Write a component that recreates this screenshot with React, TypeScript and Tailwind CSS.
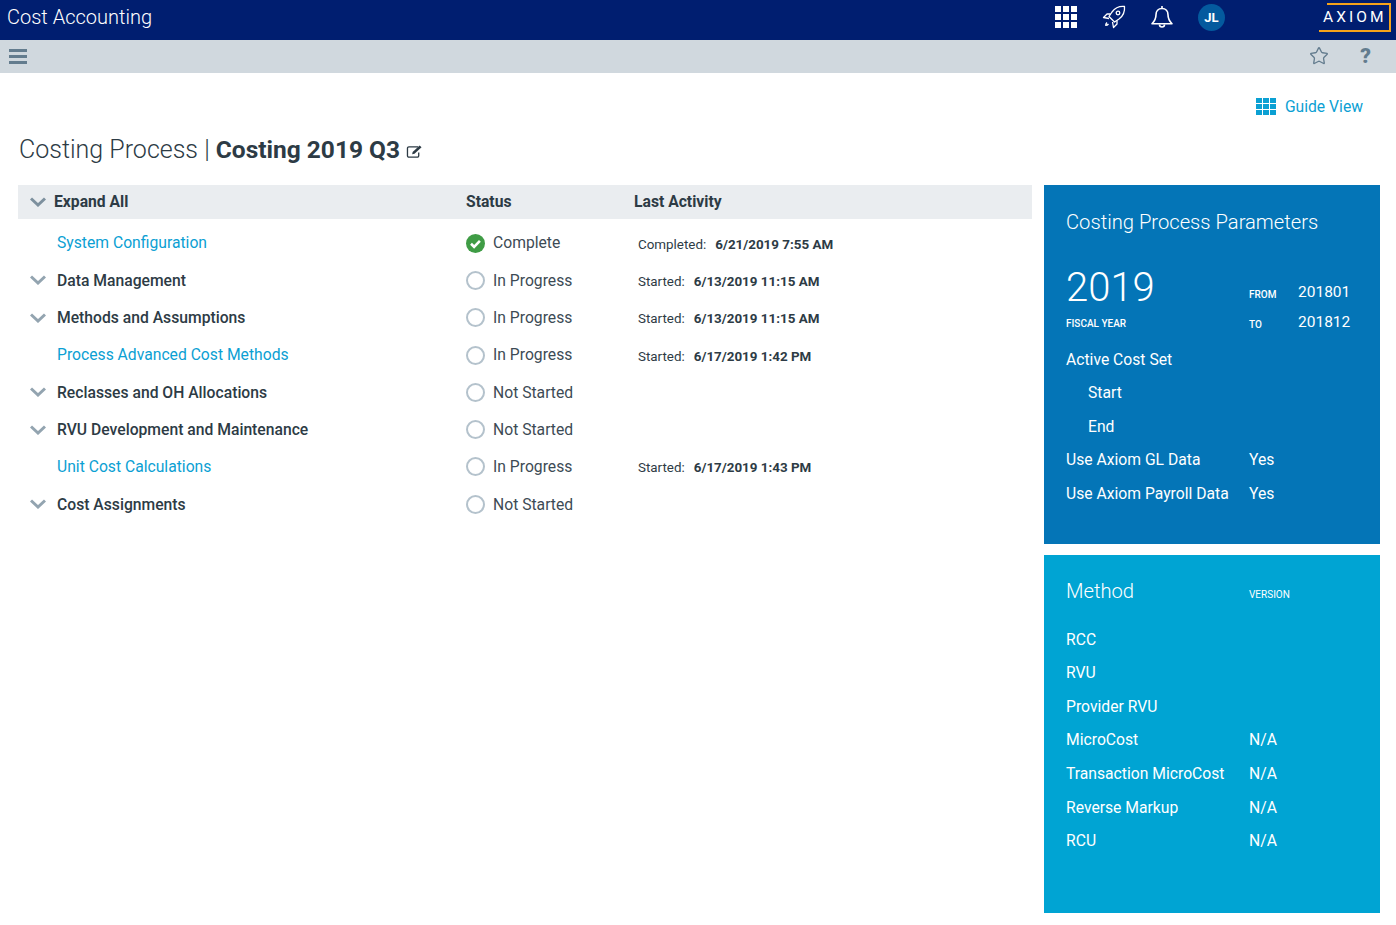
import { Star } from 'lucide-react';

const rows = [
  { name: 'System Configuration', link: true, status: 'Complete', label: 'Completed:', when: '6/21/2019 7:55 AM' },
  { name: 'Data Management', status: 'In Progress', label: 'Started:', when: '6/13/2019 11:15 AM' },
  { name: 'Methods and Assumptions', status: 'In Progress', label: 'Started:', when: '6/13/2019 11:15 AM' },
  { name: 'Process Advanced Cost Methods', link: true, status: 'In Progress', label: 'Started:', when: '6/17/2019 1:42 PM' },
  { name: 'Reclasses and OH Allocations', status: 'Not Started' },
  { name: 'RVU Development and Maintenance', status: 'Not Started' },
  { name: 'Unit Cost Calculations', link: true, status: 'In Progress', label: 'Started:', when: '6/17/2019 1:43 PM' },
  { name: 'Cost Assignments', status: 'Not Started' },
];

const params = [
  { name: 'Active Cost Set' },
  { name: 'Start', indent: true },
  { name: 'End', indent: true },
  { name: 'Use Axiom GL Data', value: 'Yes' },
  { name: 'Use Axiom Payroll Data', value: 'Yes' },
];

const methods = [
  { name: 'RCC' },
  { name: 'RVU' },
  { name: 'Provider RVU' },
  { name: 'MicroCost', value: 'N/A' },
  { name: 'Transaction MicroCost', value: 'N/A' },
  { name: 'Reverse Markup', value: 'N/A' },
  { name: 'RCU', value: 'N/A' },
];

function Chevron({ className }: { className: string }) {
  return (
    <svg viewBox="0 0 16 10" className={className} fill="none" stroke="currentColor" strokeWidth="3">
      <path d="M1 1.500l7 6.500 7-6.500" />
    </svg>
  );
}

function StatusIcon({ done }: { done: boolean }) {
  if (done) {
    return (
      <svg viewBox="0 0 19 19" className="w-[19px] h-[19px]">
        <circle cx="9.5" cy="9.5" r="9.5" fill="#3f9c45" />
        <path d="M5 9.8l3.1 3 5.8-5.9" fill="none" stroke="#fff" strokeWidth="2.6" />
      </svg>
    );
  }
  return <span className="w-[19px] h-[19px] rounded-full border-2 border-[#b4c2cc]" />;
}

function ParamRow({ name, value, indent }: { name: string; value?: string; indent?: boolean }) {
  return (
    <div className="flex items-center h-[33.6px] text-[15.7px]">
      <span className={indent ? 'w-[183px] pl-[22px]' : 'w-[183px]'}>{name}</span>
      {value && <span>{value}</span>}
    </div>
  );
}

export default function App() {
  return (
    <div className="h-[925px] overflow-hidden bg-white text-[#2d3b45] font-['Roboto',sans-serif]">
      {/* Top bar */}
      <div className="h-10 bg-[#001e70] flex items-start pl-[7px] pr-[5px] text-white">
        <span className="text-xl font-light leading-[35px]">Cost Accounting</span>
        <div className="ml-auto flex items-start">
          <div className="mt-[6px] grid grid-cols-3 gap-[2px]">
            {Array.from({ length: 9 }).map((_, i) => (
              <span key={i} className="w-[6px] h-[6px] bg-white" />
            ))}
          </div>
          <svg viewBox="0 0 24 24" className="mt-[5px] ml-[25px] w-6 h-6" fill="none" stroke="#fff" strokeWidth="1.3" strokeLinejoin="round">
            <path d="M22.500 1.500c-5-.5-9.500 1.500-12.500 5.500L7 11.500l5.500 5.500 4.500-3c3.500-2.500 6-7 5.500-12.500z" />
            <circle cx="16" cy="8" r="1.800" />
            <path d="M8.500 9H5L1.500 12.500 7 13.500M15 15.500V19l-3.500 3.500-1-5.500M5 17.500c-1 1-1.300 2-1.300 2.800 1 0 2-.4 2.800-1.300" />
          </svg>
          <svg viewBox="0 0 24 24" className="mt-[5px] ml-[24px] w-6 h-6" fill="none" stroke="#fff" strokeWidth="1.6" strokeLinejoin="round">
            <path d="M12 3.500c-3.800 0-6 2.800-6 6.300 0 4.200-1.500 6.500-4 9h20c-2.500-2.500-4-4.800-4-9 0-3.500-2.200-6.300-6-6.300z" />
            <path d="M12 1v2.500M9.500 19.500c0 1.500 1 2.500 2.500 2.500s2.500-1 2.500-2.500" />
          </svg>
          <span className="mt-[4px] ml-[24px] w-[27px] h-[27px] rounded-full bg-[#045a9e] flex items-center justify-center text-[13px] font-bold">JL</span>
          <div className="relative mt-[3px] ml-[94px] w-[72px] h-[29px] flex items-center pl-[4px]">
            <span className="absolute right-0 top-0 bottom-0 w-[64px] border-t-2 border-r-2 border-[#f5a31a]" />
            <span className="absolute left-0 right-0 bottom-0 border-b-2 border-[#f5a31a]" />
            <span className="text-[15.5px] tracking-[0.2em]">AXIOM</span>
          </div>
        </div>
      </div>

      {/* Sub bar */}
      <div className="h-[33px] bg-[#d0d8de] flex items-center pl-[9px] pr-[25px] text-[#637c8e]">
        <div className="flex flex-col gap-[3px]">
          <span className="w-[18px] h-[3px] bg-[#637c8e]" />
          <span className="w-[18px] h-[3px] bg-[#637c8e]" />
          <span className="w-[18px] h-[3px] bg-[#637c8e]" />
        </div>
        <Star className="ml-auto w-[20px] h-[20px] mb-[2px]" strokeWidth={1.6} />
        <span className="ml-[31px] text-[21px] font-black leading-none">?</span>
      </div>

      {/* Guide link */}
      <div className="flex justify-end items-center gap-[9px] pt-[22px] pr-[33px] text-[#0ba0d3] text-[15.7px]">
        <div className="grid grid-cols-3 gap-[1px] w-[20px]">
          {Array.from({ length: 9 }).map((_, i) => (
            <span key={i} className="h-[5px] bg-[#0ba0d3]" />
          ))}
        </div>
        <span>Guide View</span>
      </div>

      {/* Title */}
      <div className="flex items-center pl-[19px] pt-[2px] h-[61px] text-[25px] font-light">
        <span>Costing Process |&nbsp;</span>
        <span className="font-bold text-[24.5px]">Costing 2019 Q3</span>
        <svg viewBox="0 0 18 16" className="ml-[6px] w-[17px] h-[15px] mt-[3px]" fill="none" stroke="#2d3b45" strokeWidth="1.4">
          <path d="M13 3H3a1.500 1.500 0 0 0-1.500 1.500v8A1.500 1.500 0 0 0 3 14h9a1.500 1.500 0 0 0 1.500-1.500V9" />
          <path d="M7 8.500L14.500 1.500l2 2L9 10.500l-2.500.5z" fill="#2d3b45" stroke="none" />
        </svg>
      </div>

      <div className="flex items-start pt-[5px] pl-[18px] pr-4 gap-3">
        {/* Process table */}
        <div className="w-[1014px]">
          <div className="h-[34px] bg-[#eaedf0] flex items-center text-[15.7px] font-bold">
            <Chevron className="ml-[12px] w-[16px] h-[10px] text-[#7d909e]" />
            <span className="ml-[8px] w-[412px]">Expand All</span>
            <span className="w-[168px]">Status</span>
            <span>Last Activity</span>
          </div>
          <div className="pt-[6px]">
            {rows.map((row) => (
              <div key={row.name} className="h-[37.3px] flex items-center text-[15.7px]">
                <div className="w-[448px] flex items-center">
                  {!row.link && <Chevron className="ml-[12px] mr-[11px] w-[16px] h-[10px] text-[#93a4b0]" />}
                  {row.link
                    ? <span className="ml-[39px] text-[#0ba0d3]">{row.name}</span>
                    : <span className="font-medium">{row.name}</span>}
                </div>
                <div className="w-[172px] flex items-center gap-2">
                  <StatusIcon done={row.status === 'Complete'} />
                  <span className="text-[#3d4b55]">{row.status}</span>
                </div>
                {row.when && (
                  <div className="flex gap-[9px] text-[13.4px] pt-[3px]">
                    <span>{row.label}</span>
                    <span className="font-bold">{row.when}</span>
                  </div>
                )}
              </div>
            ))}
          </div>
        </div>

        {/* Side panels */}
        <div className="w-[336px] flex flex-col gap-[11px] text-white">
          <div className="h-[359px] bg-[#0475b7] pl-[22px] pt-[23px]">
            <div className="text-[20.2px] font-light leading-[28px]">Costing Process Parameters</div>
            <div className="flex mt-[28px]">
              <div className="w-[183px]">
                <div className="text-[40px] font-light leading-[47px]">2019</div>
                <div className="text-[10px] font-medium mt-[6px] leading-[14px]">FISCAL YEAR</div>
              </div>
              <div className="pt-[10px] text-[15.5px]">
                <div className="flex items-center h-[38px]">
                  <span className="w-[49px] text-[10px] font-medium pt-[3px]">FROM</span>
                  <span>201801</span>
                </div>
                <div className="flex items-center h-[38px] mt-[-8px]">
                  <span className="w-[49px] text-[10px] font-medium pt-[3px]">TO</span>
                  <span>201812</span>
                </div>
              </div>
            </div>
            <div className="mt-[1px]">
              {params.map((p) => (
                <ParamRow key={p.name} {...p} />
              ))}
            </div>
          </div>

          <div className="h-[358px] bg-[#00a4d3] pl-[22px] pt-[23px]">
            <div className="flex items-center h-[28px]">
              <span className="w-[183px] text-[20.2px] font-light">Method</span>
              <span className="text-[10px] pt-[5px]">VERSION</span>
            </div>
            <div className="mt-[17px]">
              {methods.map((m) => (
                <ParamRow key={m.name} {...m} />
              ))}
            </div>
          </div>
        </div>
      </div>
    </div>
  );
}
